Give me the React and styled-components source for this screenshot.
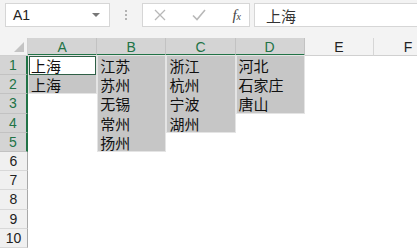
import React from 'react';
import styled, { createGlobalStyle } from 'styled-components';

const GREEN = '#217346';
const CJK = '"Noto Sans CJK SC", "Noto Sans", sans-serif';
const LATIN = '"Liberation Sans", Arial, sans-serif';

const GlobalStyle = createGlobalStyle`
    html, body {
        margin: 0;
        padding: 0;
        background: #fff;
        font-family: ${LATIN};
        overflow: hidden;
    }
`;

const Sheet = styled.div`
    width: 417px;
    height: 250px;
    display: flex;
    flex-direction: column;
    background: #fff;
    overflow: hidden;
`;

const Toolbar = styled.div`
    height: 38px;
    box-sizing: border-box;
    padding: 3px 0 0 5px;
    background: #f3f3f3;
    display: flex;
    align-items: flex-start;
`;

const Box = styled.div`
    height: 24px;
    box-sizing: border-box;
    background: #fff;
    border: 1px solid #d6d6d6;
    display: flex;
    align-items: center;
`;

const NameBox = styled(Box)`
    width: 105px;
    padding: 0 0 0 7px;
    font-size: 14px;
    color: #222;
    justify-content: space-between;
`;

const DropArrow = styled.span`
    width: 0;
    height: 0;
    margin-right: 9px;
    border-left: 4px solid transparent;
    border-right: 4px solid transparent;
    border-top: 4px solid #777;
`;

const Dots = styled.div`
    width: 32px;
    height: 24px;
    display: flex;
    flex-direction: column;
    align-items: center;
    justify-content: center;
    gap: 2px;
    span {
        width: 2px;
        height: 2px;
        background: #b3b3b3;
    }
`;

const ButtonsBox = styled(Box)`
    width: 108px;
    padding: 0 8px 0 11px;
    justify-content: space-between;
    color: #b8b8b8;
`;

const Fx = styled.span`
    font-family: "Liberation Serif", serif;
    font-style: italic;
    font-size: 15px;
    color: #444;
    sub {
        font-size: 10px;
        vertical-align: 0;
    }
`;

const FormulaInput = styled(Box)`
    flex: 1;
    margin-left: 4px;
    border-right: none;
    padding-left: 11px;
    font-family: ${CJK};
    font-size: 15px;
    color: #333;
`;

const Grid = styled.div`
    display: grid;
    grid-template-columns: 28px repeat(6, 69.2px);
    grid-template-rows: 18px repeat(10, 19.2px);
`;

const Corner = styled.div`
    grid-row: 1;
    grid-column: 1;
    background: #f3f3f3;
    border-right: 1px solid #d0d0d0;
    border-bottom: 1px solid #d0d0d0;
    box-sizing: border-box;
    display: flex;
    align-items: flex-end;
    justify-content: flex-end;
    padding: 0 3px 3px 0;
    &::after {
        content: '';
        width: 0;
        height: 0;
        border-left: 10px solid transparent;
        border-bottom: 10px solid #c4c4c4;
    }
`;

const ColHead = styled.div`
    grid-row: 1;
    box-sizing: border-box;
    background: ${p => (p.$on ? '#d4d4d4' : '#f3f3f3')};
    color: ${p => (p.$on ? GREEN : '#222')};
    border-right: 1px solid ${p => (p.$on ? '#c2c2c2' : '#d6d6d6')};
    border-bottom: ${p => (p.$on ? `2px solid ${GREEN}` : '1px solid #d0d0d0')};
    font-size: 14px;
    display: flex;
    align-items: center;
    justify-content: center;
    padding-top: 1px;
`;

const RowHead = styled.div`
    grid-column: 1;
    box-sizing: border-box;
    background: ${p => (p.$on ? '#d4d4d4' : '#f0f0f0')};
    color: ${p => (p.$on ? GREEN : '#222')};
    border-right: ${p => (p.$on ? `2px solid ${GREEN}` : '1px solid #a8a8a8')};
    border-bottom: 1px solid ${p => (p.$on ? '#c2c2c2' : '#d8d8d8')};
    font-size: 14px;
    display: flex;
    align-items: center;
    justify-content: center;
`;

const Range = styled.div`
    box-sizing: border-box;
    background: #c6c6c6;
    border: 1px solid #e4e4e4;
    display: grid;
    grid-auto-rows: 19.2px;
    margin-top: -1px;
`;

const Cell = styled.div`
    box-sizing: border-box;
    height: 19.2px;
    font-family: ${CJK};
    font-size: 15px;
    line-height: 16px;
    color: #111;
    padding: 2px 0 0 2px;
    white-space: nowrap;
    overflow: hidden;
    background: ${p => (p.$active ? '#fff' : 'transparent')};
    box-shadow: ${p => (p.$active ? 'inset 0 0 0 1px #2f5f46' : 'none')};
`;

const cols = ['A', 'B', 'C', 'D', 'E', 'F'];
const ranges = [
    ['上海', '上海'],
    ['江苏', '苏州', '无锡', '常州', '扬州'],
    ['浙江', '杭州', '宁波', '湖州'],
    ['河北', '石家庄', '唐山'],
];

export default function App() {
    return (
        <Sheet>
            <GlobalStyle />
            <Toolbar>
                <NameBox>A1<DropArrow /></NameBox>
                <Dots><span /><span /><span /></Dots>
                <ButtonsBox>
                    <svg width="12" height="12" viewBox="0 0 12 12">
                        <path d="M1 1L11 11M11 1L1 11" stroke="#b8b8b8" strokeWidth="1.3" fill="none" />
                    </svg>
                    <svg width="14" height="12" viewBox="0 0 14 12">
                        <path d="M1 6.5L5 10.5L13 1" stroke="#b8b8b8" strokeWidth="1.6" fill="none" />
                    </svg>
                    <Fx>f<sub>x</sub></Fx>
                </ButtonsBox>
                <FormulaInput>上海</FormulaInput>
            </Toolbar>
            <Grid>
                <Corner />
                {cols.map((c, i) => (
                    <ColHead key={c} $on={i < 4} style={{ gridColumn: i + 2 }}>{c}</ColHead>
                ))}
                {Array.from({ length: 10 }, (_, i) => (
                    <RowHead key={i} $on={i < 5} style={{ gridRow: i + 2 }}>{i + 1}</RowHead>
                ))}
                {ranges.map((items, i) => (
                    <Range key={i} style={{ gridColumn: i + 2, gridRow: `2 / span ${items.length}` }}>
                        {items.map((t, j) => (
                            <Cell key={j} $active={i === 0 && j === 0}>{t}</Cell>
                        ))}
                    </Range>
                ))}
            </Grid>
        </Sheet>
    );
}
